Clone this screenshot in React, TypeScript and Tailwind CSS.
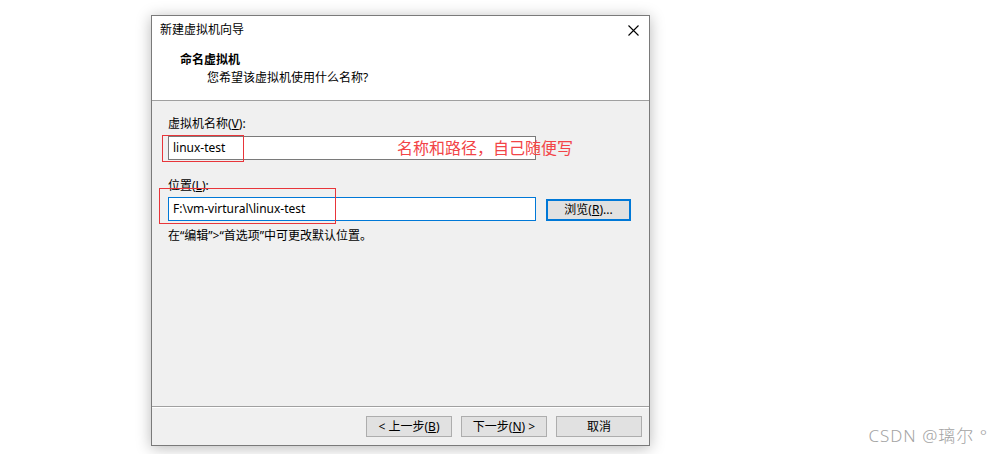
import React from 'react';

const font = { fontFamily: '"Noto Sans", "Noto Sans CJK SC", sans-serif' };

const WinButton: React.FC<{ children: React.ReactNode; focused?: boolean }> = ({ children, focused }) => (
  <button
    className={
      focused
        ? 'w-[85px] h-[22px] bg-[#e1e1e1] border-2 border-[#0078d7] text-[12px] text-black leading-none'
        : 'w-[86px] h-[21px] bg-[#e1e1e1] border border-[#adadad] text-[12px] text-black leading-none'
    }
  >
    {children}
  </button>
);

const Dialog: React.FC = () => (
  <div className="w-[499px] h-[431px] flex flex-col border border-[#7a7a7a] bg-[#f0f0f0] shadow-[0_2px_14px_rgba(0,0,0,0.28)]">
    {/* header */}
    <div className="h-[85px] shrink-0 bg-white border-b border-[#a0a0a0] flex flex-col">
      <div className="h-[28px] flex items-center justify-between pl-[8px] pr-[10px]">
        <span className="text-[12px] text-black">新建虚拟机向导</span>
        <svg width="11" height="11" viewBox="0 0 11 11" className="mt-[1px]">
          <path d="M0.5 0.5 L10.5 10.5 M10.5 0.5 L0.5 10.5" stroke="#000" strokeWidth="1.1" />
        </svg>
      </div>
      <div className="pl-[28px] mt-[7px]">
        <div className="text-[12px] leading-[18px] font-bold text-black">命名虚拟机</div>
        <div className="pl-[27px] text-[12px] leading-[18px] text-black">您希望该虚拟机使用什么名称?</div>
      </div>
    </div>

    {/* body */}
    <div className="flex-1 px-[16px] pt-[15px] flex flex-col">
      <div className="text-[12px] leading-[16px] text-black">
        虚拟机名称(<span className="underline">V</span>):
      </div>
      <div className="relative mt-[4px] w-[368px] h-[24px] bg-white border border-[#7a7a7a] flex items-center pl-[4px]">
        <span className="text-[12px] text-black">linux-test</span>
        <div className="absolute left-[-7px] top-[-2px] w-[82px] h-[27px] border border-[#e8353a]" />
        <span className="absolute left-[228px] top-[0px] text-[16px] leading-[22px] text-[#f24447] whitespace-nowrap">
          名称和路径，自己随便写
        </span>
      </div>

      <div className="mt-[18px] text-[12px] leading-[16px] text-black">
        位置(<span className="underline">L</span>):
      </div>
      <div className="mt-[2px] flex items-center">
        <div className="relative w-[368px] h-[24px] bg-white border border-[#0078d7] flex items-center pl-[4px]">
          <span className="text-[12px] text-black">F:\vm-virtural\linux-test</span>
          <div className="absolute left-[-10px] top-[-10px] w-[177px] h-[36px] border border-[#e8353a]" />
        </div>
        <div className="ml-[10px]">
          <WinButton focused>
            浏览(<span className="underline">R</span>)...
          </WinButton>
        </div>
      </div>
      <div className="mt-[7px] text-[12px] leading-[16px] text-black">
        在“编辑”&gt;“首选项”中可更改默认位置。
      </div>
    </div>

    {/* footer */}
    <div className="h-[39px] shrink-0 border-t border-[#a0a0a0] shadow-[inset_0_1px_0_#ffffff] flex items-start justify-end gap-[9px] pt-[9px] pr-[7px]">
      <WinButton>
        &lt; 上一步(<span className="underline">B</span>)
      </WinButton>
      <WinButton>
        下一步(<span className="underline">N</span>) &gt;
      </WinButton>
      <WinButton>取消</WinButton>
    </div>
  </div>
);

export default function App() {
  return (
    <div className="w-[1004px] h-[454px] bg-white flex overflow-hidden" style={font}>
      <div className="pl-[151px] pt-[15px]">
        <Dialog />
      </div>
      <div className="flex-1 flex items-end justify-end pr-[16px] pb-[8px]">
        <span className="text-[17px] leading-[20px] tracking-[1px] font-light text-[#a3a3a3] whitespace-nowrap">
          CSDN @璃尔 °
        </span>
      </div>
    </div>
  );
}
